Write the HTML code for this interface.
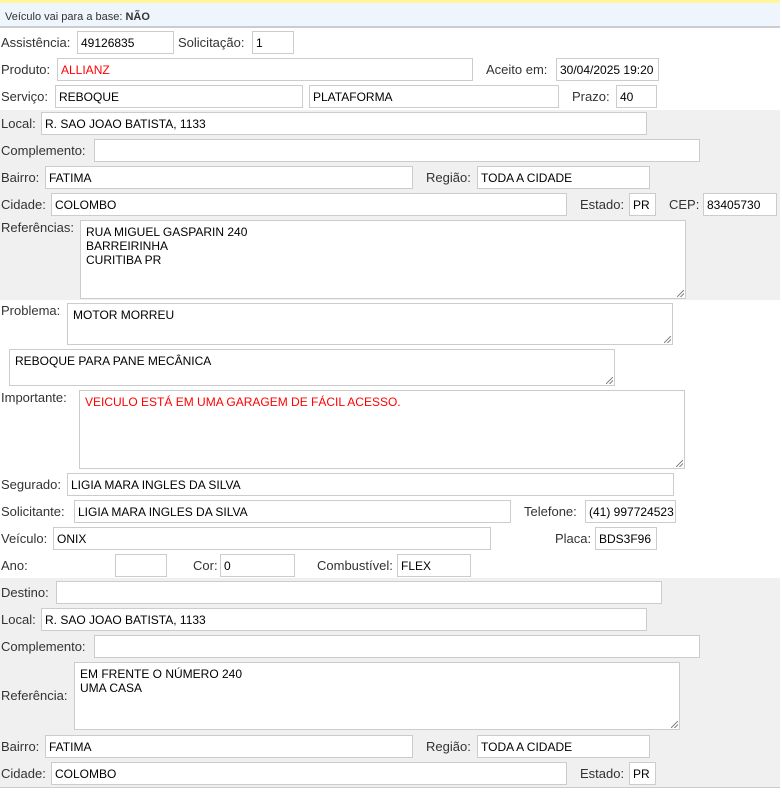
<!DOCTYPE html>
<html><head><meta charset="utf-8"><style>
*{box-sizing:border-box;margin:0;padding:0}
body{width:782px;height:800px;position:relative;background:#fff;font-family:"Liberation Sans","DejaVu Sans",sans-serif;overflow:hidden}
.b{position:absolute;left:0;width:780px}
.l{position:absolute;font-size:13px;color:#333;line-height:16px;white-space:nowrap}
.i{position:absolute;height:23px;border:1px solid #ccc;background:#fff;font-size:12px;color:#000;padding:4px 3px 0 3px;line-height:14px;white-space:nowrap;overflow:hidden}
.t{position:absolute;border:1px solid #ccc;background:#fff;font-size:12px;color:#000;padding:4px 5px;line-height:14px;white-space:pre;overflow:hidden}
.t::after{content:"";position:absolute;right:1px;bottom:1px;width:7px;height:7px;background:linear-gradient(135deg,transparent 45%,#888 46%,#888 54%,transparent 55%,transparent 70%,#888 71%,#888 79%,transparent 80%)}
.r{color:#f00}
</style></head><body>
<div class="b" style="top:0;height:3px;background:#fff59a"></div>
<div class="b" style="top:3px;height:25px;background:#eef5fd;border-bottom:2px solid #ccc"></div>
<div class="l" style="left:5px;top:9px;font-size:11px">Veículo vai para a base: <b>NÃO</b></div>
<div class="b" style="top:110px;height:190px;background:#f0f0f0"></div>
<div class="b" style="top:578px;height:210px;background:#f0f0f0;border-bottom:1px solid #ccc"></div>

<div class="l" style="left:1px;top:35px">Assistência:</div><div class="i" style="left:77px;top:31px;width:97px">49126835</div>
<div class="l" style="left:178px;top:35px">Solicitação:</div><div class="i" style="left:252px;top:31px;width:42px">1</div>
<div class="l" style="left:1px;top:62px">Produto:</div><div class="i r" style="left:57px;top:58px;width:416px">ALLIANZ</div>
<div class="l" style="left:486px;top:62px">Aceito em:</div><div class="i" style="left:556px;top:58px;width:103px">30/04/2025 19:20</div>
<div class="l" style="left:1px;top:89px">Serviço:</div><div class="i" style="left:55px;top:85px;width:248px">REBOQUE</div>
<div class="i" style="left:309px;top:85px;width:250px">PLATAFORMA</div>
<div class="l" style="left:572px;top:89px">Prazo:</div><div class="i" style="left:616px;top:85px;width:41px">40</div>

<div class="l" style="left:1px;top:116px">Local:</div><div class="i" style="left:41px;top:112px;width:606px">R. SAO JOAO BATISTA, 1133</div>
<div class="l" style="left:1px;top:143px">Complemento:</div><div class="i" style="left:94px;top:139px;width:606px"></div>
<div class="l" style="left:1px;top:170px">Bairro:</div><div class="i" style="left:45px;top:166px;width:368px">FATIMA</div>
<div class="l" style="left:426px;top:170px">Região:</div><div class="i" style="left:477px;top:166px;width:173px">TODA A CIDADE</div>
<div class="l" style="left:1px;top:197px">Cidade:</div><div class="i" style="left:51px;top:193px;width:516px">COLOMBO</div>
<div class="l" style="left:580px;top:197px">Estado:</div><div class="i" style="left:629px;top:193px;width:27px">PR</div>
<div class="l" style="left:669px;top:197px">CEP:</div><div class="i" style="left:703px;top:193px;width:74px">83405730</div>
<div class="l" style="left:1px;top:220px">Referências:</div><div class="t" style="left:80px;top:220px;width:606px;height:79px">RUA MIGUEL GASPARIN 240
BARREIRINHA
CURITIBA PR</div>

<div class="l" style="left:1px;top:303px">Problema:</div><div class="t" style="left:67px;top:303px;width:606px;height:42px">MOTOR MORREU</div>
<div class="t" style="left:9px;top:349px;width:606px;height:37px">REBOQUE PARA PANE MECÂNICA</div>
<div class="l" style="left:1px;top:390px">Importante:</div><div class="t r" style="left:79px;top:390px;width:606px;height:79px">VEICULO ESTÁ EM UMA GARAGEM DE FÁCIL ACESSO.</div>
<div class="l" style="left:1px;top:477px">Segurado:</div><div class="i" style="left:67px;top:473px;width:607px">LIGIA MARA INGLES DA SILVA</div>
<div class="l" style="left:1px;top:504px">Solicitante:</div><div class="i" style="left:74px;top:500px;width:437px">LIGIA MARA INGLES DA SILVA</div>
<div class="l" style="left:524px;top:504px">Telefone:</div><div class="i" style="left:585px;top:500px;width:91px">(41) 997724523</div>
<div class="l" style="left:1px;top:531px">Veículo:</div><div class="i" style="left:53px;top:527px;width:438px">ONIX</div>
<div class="l" style="left:555px;top:531px">Placa:</div><div class="i" style="left:595px;top:527px;width:62px">BDS3F96</div>
<div class="l" style="left:1px;top:558px">Ano:</div><div class="i" style="left:115px;top:554px;width:52px"></div>
<div class="l" style="left:193px;top:558px">Cor:</div><div class="i" style="left:220px;top:554px;width:75px">0</div>
<div class="l" style="left:317px;top:558px">Combustível:</div><div class="i" style="left:397px;top:554px;width:74px">FLEX</div>

<div class="l" style="left:1px;top:585px">Destino:</div><div class="i" style="left:56px;top:581px;width:606px"></div>
<div class="l" style="left:1px;top:612px">Local:</div><div class="i" style="left:41px;top:608px;width:606px">R. SAO JOAO BATISTA, 1133</div>
<div class="l" style="left:1px;top:639px">Complemento:</div><div class="i" style="left:94px;top:635px;width:606px"></div>
<div class="l" style="left:1px;top:688px">Referência:</div><div class="t" style="left:74px;top:662px;width:606px;height:68px">EM FRENTE O NÚMERO 240
UMA CASA</div>
<div class="l" style="left:1px;top:739px">Bairro:</div><div class="i" style="left:45px;top:735px;width:368px">FATIMA</div>
<div class="l" style="left:426px;top:739px">Região:</div><div class="i" style="left:477px;top:735px;width:173px">TODA A CIDADE</div>
<div class="l" style="left:1px;top:766px">Cidade:</div><div class="i" style="left:51px;top:762px;width:516px">COLOMBO</div>
<div class="l" style="left:580px;top:766px">Estado:</div><div class="i" style="left:629px;top:762px;width:27px">PR</div>
</body></html>
